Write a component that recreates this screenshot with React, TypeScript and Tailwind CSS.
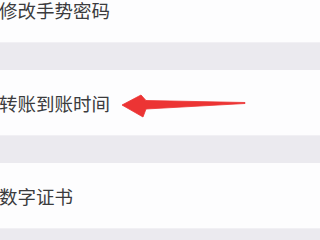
const rows = ["修改手势密码", "转账到账时间", "数字证书"];

function Arrow() {
    return (
        <svg className="absolute left-0 top-0" width="320" height="240" viewBox="0 0 320 240">
            <path
                d="M122 105 L141 95 L146 100.5 L245 102.5 L245 103.5 L146 109 L143 117 Z"
                fill="#ec3434"
                stroke="#ec3434"
                strokeWidth="0.8"
                strokeLinejoin="round"
            />
        </svg>
    );
}

export default function App() {
    return (
        <div
            className="relative w-[320px] h-[240px] overflow-hidden bg-[#ebeaef]"
            style={{ fontFamily: '"Noto Sans CJK SC", "Noto Sans", sans-serif' }}
        >
            <div className="flex flex-col gap-[27px] -mt-[23px]">
                {rows.map((label) => (
                    <div key={label} className="h-[66px] flex items-center bg-[#fdfdfe] border-b border-[#f1f0f4]">
                        <span className="-ml-px text-[18.5px] leading-[20px] text-[#3b3b3d]">{label}</span>
                    </div>
                ))}
            </div>
            <Arrow />
        </div>
    );
}
